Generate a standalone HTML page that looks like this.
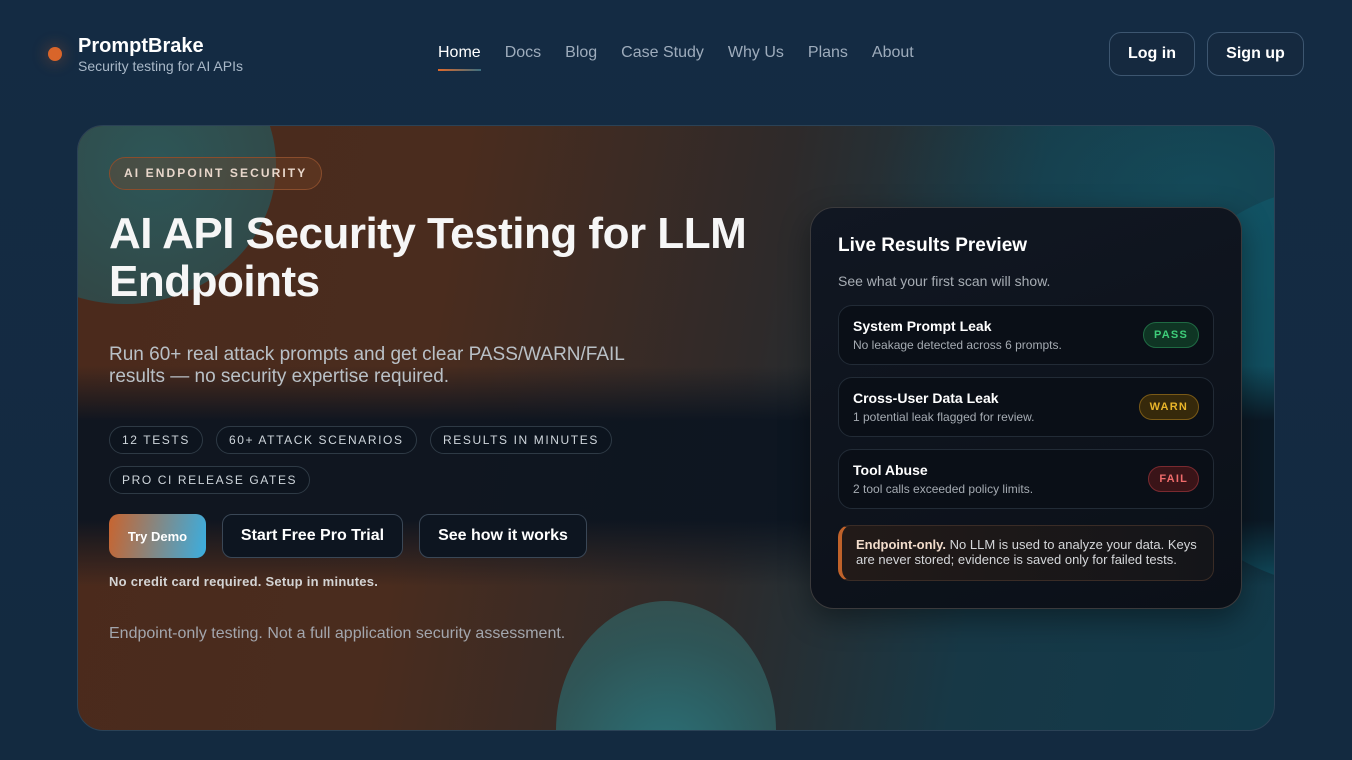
<!DOCTYPE html>
<html><head><meta charset="utf-8"><style>
*{box-sizing:border-box;margin:0;padding:0}
html,body{width:1352px;height:760px;overflow:hidden}
body{background:linear-gradient(180deg,#142b43 0%,#132a40 100%);font-family:"Liberation Sans",Arial,sans-serif;color:#fff;position:relative}
.dot{position:absolute;left:48px;top:47px;width:14px;height:14px;border-radius:50%;background:#d9652a;box-shadow:0 0 14px 4px rgba(224,105,42,.2)}
.brand{position:absolute;left:78px;top:34px}
.brand b{display:block;font-size:20px;line-height:24px}
.brand span{display:block;font-size:14px;color:#a9b8c8;line-height:16px}
.nav{position:absolute;top:44px;left:438px;display:flex;gap:24px;font-size:16px;color:#9eacbc}
.nav .on{color:#fff;position:relative}
.nav .on:after{content:"";position:absolute;left:0;right:0;top:25px;height:2px;background:linear-gradient(90deg,#e0692a,#3a6e80)}
.btn{position:absolute;top:32px;height:44px;border:1px solid #3d5670;border-radius:12px;font-weight:bold;font-size:16px;display:flex;align-items:center;justify-content:center;background:#15293f}
.card{position:absolute;left:77px;top:125px;width:1198px;height:606px;border-radius:26px;overflow:hidden;border:1px solid #2b4256;
background:
radial-gradient(ellipse 320px 180px at 1120px 60px,rgba(20,90,105,.5),transparent),
linear-gradient(100deg,#4b2a1c 0%,#4a2c1e 30%,#2e2a2a 55%,#173846 75%,#123a4a 100%)}
.band{position:absolute;left:0;right:0;top:240px;height:220px;background:linear-gradient(180deg,rgba(11,20,32,0),rgba(11,20,32,.92) 25%,rgba(11,20,32,.92) 70%,rgba(11,20,32,0))}
.c1{position:absolute;left:-105px;top:-100px;width:303px;height:278px;border-radius:50%;background:radial-gradient(circle at 60% 50%,#2a5b5e,#2f4a4a 70%,#3b4341);opacity:.9}
.c2{position:absolute;left:478px;top:475px;width:220px;height:260px;border-radius:50%;background:radial-gradient(circle at 50% 60%,#2a7880,#2e5a5c 60%,#37504e);opacity:.9}
.c3{position:absolute;left:1062px;top:60px;width:400px;height:400px;border-radius:50%;background:#125566;opacity:.8}
.pill{position:absolute;left:31px;top:31px;height:33px;padding:0 14px;border:1px solid #8a4d2c;border-radius:17px;background:rgba(120,70,40,.35);font-size:12px;font-weight:bold;letter-spacing:2.1px;color:#e8d7cb;line-height:31px}
h1{position:absolute;left:31px;top:84px;font-size:44px;line-height:48px;letter-spacing:-.5px;width:700px;color:#f6f6f6}
.sub{position:absolute;left:31px;top:218px;font-size:19px;line-height:22px;color:#b9c0c6;width:540px}
.tag{position:absolute;height:28px;border:1px solid #2e3a45;border-radius:14px;padding:0 12px;font-size:12px;letter-spacing:1.6px;color:#cfd6dc;line-height:26px;background:rgba(10,18,28,.5)}
.b{position:absolute;top:388px;height:44px;border-radius:10px;display:flex;align-items:center;justify-content:center;font-weight:bold}
.note{position:absolute;left:31px;top:448px;font-size:13px;font-weight:bold;color:#d4d4d4;letter-spacing:.25px}
.disc{position:absolute;left:31px;top:499px;font-size:16px;color:#a3a6ad}
.panel{position:absolute;left:732px;top:81px;width:432px;height:402px;border-radius:24px;background:linear-gradient(160deg,#111722,#0b1018);border:1px solid #3b3a3c;box-shadow:0 10px 30px rgba(0,0,0,.4)}
.panel h2{position:absolute;left:27px;top:27px;font-size:19px}
.panel .ps{position:absolute;left:27px;top:65px;font-size:14px;color:#a7adb4}
.row{position:absolute;left:27px;width:376px;height:60px;border:1px solid #222b36;border-radius:14px;background:#0a0f17}
.row b{position:absolute;left:14px;top:12px;font-size:14px}
.row span{position:absolute;left:14px;top:32px;font-size:12px;color:#a5abb2}
.st{position:absolute;right:14px;top:16px;height:26px;border-radius:13px;font-size:11px;font-weight:bold;letter-spacing:1.2px;line-height:24px;padding:0 10px}
.box{position:absolute;left:27px;top:317px;width:376px;height:56px;border:1px solid #3a2c26;border-left:4px solid #c0622a;border-radius:12px;background:linear-gradient(90deg,#221a18,#141519);padding:11px 14px;font-size:13px;line-height:15px;color:#d5d7da}
</style></head><body>
<div class="dot"></div>
<div class="brand"><b>PromptBrake</b><span>Security testing for AI APIs</span></div>
<div class="nav"><span class="on">Home</span><span>Docs</span><span>Blog</span><span>Case Study</span><span>Why Us</span><span>Plans</span><span>About</span></div>
<div class="btn" style="left:1109px;width:86px">Log in</div>
<div class="btn" style="left:1207px;width:97px">Sign up</div>
<div class="card">
<div class="c3"></div><div class="c1"></div>
<div class="band"></div>
<div class="c2"></div>
<div class="pill">AI ENDPOINT SECURITY</div>
<h1>AI API Security Testing for LLM Endpoints</h1>
<div class="sub">Run 60+ real attack prompts and get clear PASS/WARN/FAIL results — no security expertise required.</div>
<div class="tag" style="left:31px;top:300px">12 TESTS</div>
<div class="tag" style="left:138px;top:300px">60+ ATTACK SCENARIOS</div>
<div class="tag" style="left:352px;top:300px">RESULTS IN MINUTES</div>
<div class="tag" style="left:31px;top:340px">PRO CI RELEASE GATES</div>
<div class="b" style="left:31px;width:97px;font-size:13px;background:linear-gradient(100deg,#c8642f,#3aaee0)">Try Demo</div>
<div class="b" style="left:144px;width:181px;font-size:16px;border:1px solid #3a4756;background:#0d1520">Start Free Pro Trial</div>
<div class="b" style="left:341px;width:168px;font-size:16px;border:1px solid #3a4756;background:#0d1520">See how it works</div>
<div class="note">No credit card required. Setup in minutes.</div>
<div class="disc">Endpoint-only testing. Not a full application security assessment.</div>
<div class="panel">
<h2>Live Results Preview</h2>
<div class="ps">See what your first scan will show.</div>
<div class="row" style="top:97px"><b>System Prompt Leak</b><span>No leakage detected across 6 prompts.</span><div class="st" style="color:#3fce7a;background:#0f3524;border:1px solid #1f6a43">PASS</div></div>
<div class="row" style="top:169px"><b>Cross-User Data Leak</b><span>1 potential leak flagged for review.</span><div class="st" style="color:#e9b52a;background:#36290b;border:1px solid #7a5a17">WARN</div></div>
<div class="row" style="top:241px"><b>Tool Abuse</b><span>2 tool calls exceeded policy limits.</span><div class="st" style="color:#ef6b6b;background:#3a1418;border:1px solid #7a2a30">FAIL</div></div>
<div class="box"><b style="color:#f2dccb">Endpoint-only.</b> No LLM is used to analyze your data. Keys are never stored; evidence is saved only for failed tests.</div>
</div>
</div>
</body></html>
